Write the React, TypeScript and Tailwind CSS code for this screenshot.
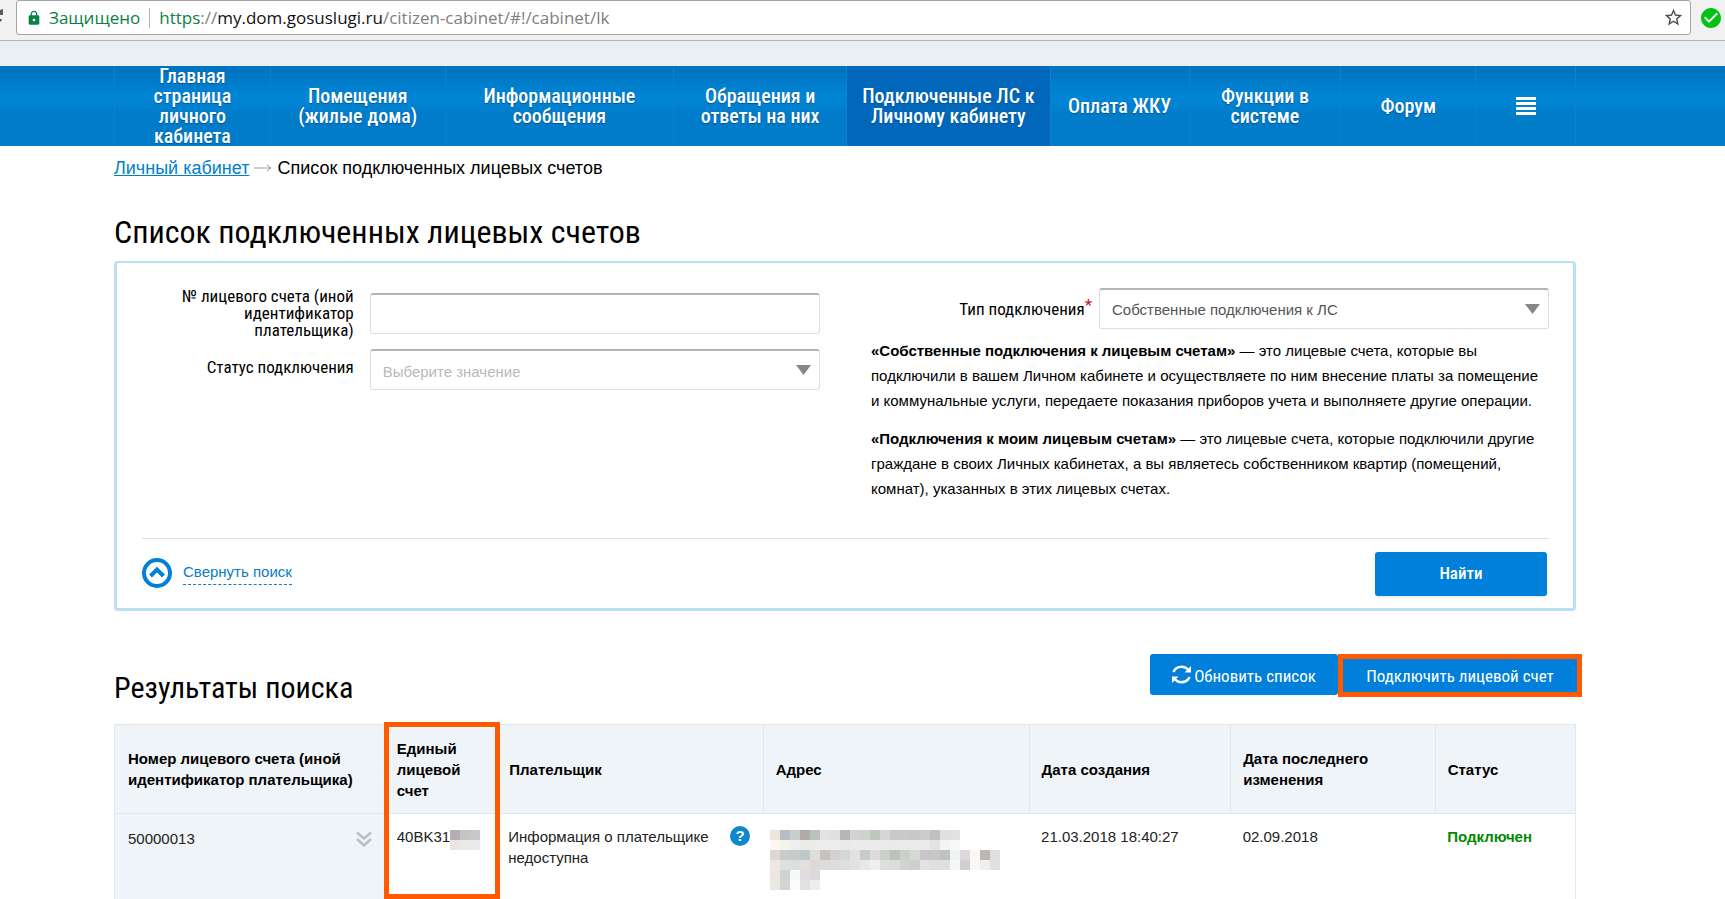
import { useState } from "react";
import { MdCheckCircle, MdLock, MdStarBorder } from "react-icons/md";


/////////////////////////////// DATA ///////////////////////////////

const NAV_ITEMS = [
  { label: "Главная страница личного кабинета", pad: "px-8" },
  { label: "Помещения (жилые дома)", pad: "px-6" },
  { label: "Информационные сообщения", pad: "px-8" },
  { label: "Обращения и ответы на них", pad: "px-5" },
  { label: "Подключенные ЛС к Личному кабинету", pad: "px-3" },
  { label: "Оплата ЖКУ", pad: "px-2" },
  { label: "Функции в системе", pad: "px-7" },
  { label: "Форум", pad: "px-4" },
];

const ACTIVE_ITEM = 4;

// hidden parts of the table, 10px per cell
const ADDRESS_MOSAIC = [
  ["#ece6dd", "#b6bec4", "#c9cfca", "#b1aaa8", "#bbc1bc", "#e2e2e2", "#e0e0e0", "#b3b8b5", "#d2d4d2", "#cfd2cf", "#bcc8bc", "#d5d7d5", "#c9cac8", "#c9cbc9", "#c8c8c8", "#cccccc", "#bfc1bf", "#e0e0e0", "#e2e1e2"],
  ["#fbf7f2", "#f4f4ef", "#eeeeee", "#ebebeb", "#ebedeb", "#ededed", "#ededed", "#e9ebe9", "#ececec", "#ebebeb", "#ececec", "#ebebeb", "#e9ebe9", "#ebebeb", "#ebebeb", "#ebebeb", "#e3e3e3", "#f1f5f3", "#f8f8f8"],
  ["#dfd7d5", "#c9cbc9", "#c8cac9", "#bec8ca", "#dedede", "#c8c1c0", "#d4cfd0", "#d3d8da", "#e2e2e2", "#c6cdc9", "#dcdcdc", "#ccd0cd", "#bfc1bc", "#cdcfcd", "#d3d9d5", "#cac4c9", "#c5c9c6", "#bfc3be", "#edf5f3", "#dcd9dc", "#fbf8f4", "#bcb9b5", "#dde0df"],
  ["#ece8e4", "#dde0dd", "#dcdedd", "#e0e0e0", "#dfd9d6", "#dcdcdc", "#dddddd", "#dedede", "#e2e2e2", "#e8e8e8", "#f0efee", "#dedede", "#dcdcdc", "#d0d4d0", "#cdcfcc", "#e5e0e5", "#dfdfdf", "#dfdfdf", "#f3f9f7", "#d1cdd0", "#f9f8f5", "#efeeed", "#dde2e0"],
  ["#ece6e0", "#cfd3cf", "#f8faf8", "#e0dcdf", "#dadbdc"],
  ["#ece7e2", "#d2d6d3", "#fafcfb", "#e4dfe1", "#eceeee"],
];

const ACCOUNT_MOSAIC = [
  ["#b5adb3", "#c3c6c2", "#c7c7cb"],
  ["#ebe5e0", "#e9e9e7", "#eae9ec"],
];


/////////////////////////////// PARTS ///////////////////////////////

function Mosaic ({ cells, label }: { cells: string[][]; label: string }) {
  const cols = Math.max(...cells.map(row => row.length));

  return (
    <svg
      role="img"
      aria-label={label}
      width={cols * 10}
      height={cells.length * 10}
      shapeRendering="crispEdges"
    >
      {cells.map((row, y) =>
        row.map((fill, x) => (
          <rect key={`${x}-${y}`} x={x * 10} y={y * 10} width="10" height="10" fill={fill}/>
        ))
      )}
    </svg>
  );
}

function RefreshIcon () {
  return (
    <svg viewBox="0 0 19 19" className="size-[19px]" fill="none" stroke="currentColor" strokeWidth="2.5" aria-hidden="true">
      <path d="M1.500 7C3 3 7 1.800 10 1.800c3 0 4.500 1 6.500 3"/>
      <path d="M17.500 12C16 16 12 17.200 9 17.200c-3 0-4.500-1-6.500-3"/>
      <path d="M19 1v6.500h-6.500zM0 18V11.500h6.500z" fill="currentColor" stroke="none"/>
    </svg>
  );
}

function SelectBox ({ id, options, muted }: { id: string; options: string[]; muted?: boolean }) {
  return (
    <div className="relative">
      <select
        id={id}
        className={`block w-full h-[41px] px-3 appearance-none rounded-[3px] border border-[#dedede] border-t-2 border-t-[#b5b5b5] bg-white text-[15px] ${muted ? "pt-1 text-[#b9b9b9]" : "text-[#555555]"}`}
      >
        {options.map(option => <option key={option}>{option}</option>)}
      </select>
      <svg
        viewBox="0 0 15 10"
        className="absolute right-[9px] top-4 w-[15px] h-[10px] pointer-events-none"
        aria-hidden="true"
      >
        <path d="M0 0h15L7.500 10z" fill="#878787"/>
      </svg>
    </div>
  );
}


/////////////////////////////// BROWSER BAR ///////////////////////////////

function AddressBar () {
  return (
    <div className="flex items-start h-[41px] bg-[#f1f1f1] border-b border-[#b0b3b6] font-['Open_Sans','Noto_Sans',sans-serif]">

      {/* edge of the reload button */}
      <svg viewBox="0 0 16 16" className="w-4 h-4 mt-[9px] text-[#5a5a5a]" aria-hidden="true">
        <path d="M0 1l3-1v6H0zM0 10h2q0 2-2 3z" fill="currentColor"/>
      </svg>

      <div className="flex flex-1 items-center h-[35px] pl-[9px] pr-[6px] bg-white border border-[#a5a5a5] rounded-[3px] text-[17px]">
        <MdLock className="size-4 text-[#0b8043]"/>
        <span className="ml-[7px] text-[#0b8043]">Защищено</span>
        <span className="mx-[9px] w-px h-5 bg-[#b4b4b4]"/>
        <p className="flex-1 text-[#808080]">
          <span className="text-[#0b8043]">https</span>://<span className="text-[#111111]">my.dom.gosuslugi.ru</span>/citizen-cabinet/#!/cabinet/lk
        </p>
        <button type="button" aria-label="Добавить в закладки">
          <MdStarBorder className="size-[21px] text-[#4d4d4d]"/>
        </button>
      </div>

      <MdCheckCircle className="size-6 mt-[6px] ml-2 mr-[2px] text-[#00c314]"/>
    </div>
  );
}


/////////////////////////////// NAVIGATION ///////////////////////////////

function NavBar () {
  return (
    <nav className="h-20 pl-[114px] pr-[149px] bg-linear-to-b from-[#0071bd] via-[#0086d6] via-40% to-[#007cc9] to-60%">
      <ul className="grid grid-cols-[156fr_175fr_229fr_173fr_204fr_139fr_152fr_135fr_99fr] h-full border-x border-[#0f80cb]">
        {NAV_ITEMS.map((item, i) => (
          <li key={item.label} className={`border-r border-[#0f80cb] ${i === ACTIVE_ITEM ? "bg-[#0067ba]" : ""}`}>
            <a
              href="#"
              className={`flex h-full items-center justify-center text-center text-white text-[20px] leading-5 font-medium [text-shadow:0_1px_1px_#00559a] font-['Roboto_Condensed','Liberation_Sans_Narrow',Roboto,sans-serif] ${item.pad}`}
            >
              {item.label}
            </a>
          </li>
        ))}
        <li>
          <button type="button" aria-label="Все разделы" className="flex w-full h-full items-center justify-center">
            <svg viewBox="0 0 20 18" className="w-5 h-[18px]" aria-hidden="true">
              <path d="M0 0h20v3H0zM0 5h20v3H0zM0 10h20v3H0zM0 15h20v3H0z" fill="#ffffff"/>
            </svg>
          </button>
        </li>
      </ul>
    </nav>
  );
}


/////////////////////////////// SEARCH PANEL ///////////////////////////////

function SearchPanel () {
  const [account, setAccount] = useState("");

  return (
    <form
      className="h-[350px] pl-[25px] pr-6 border-[3px] border-t-2 border-[#b9dff2] rounded-[4px]"
      onSubmit={e => e.preventDefault()}
    >
      <div className="flex h-[276px] border-b border-[#dcdfe2]">

        {/* LEFT HAND SIDE */}
        <div className="w-[678px] shrink-0 pt-[25px]">
          <div className="flex h-[51px] items-center">
            <label htmlFor="account" className="w-[212px] pl-7 text-right text-[17px] leading-[17px] font-['Roboto_Condensed','Liberation_Sans_Narrow',Roboto,sans-serif]">
              № лицевого счета (иной идентификатор плательщика)
            </label>
            <input
              id="account"
              type="text"
              value={account}
              onChange={e => setAccount(e.target.value)}
              className="w-[451px] h-[41px] ml-4 px-3 text-[15px] rounded-[3px] border border-[#dedede] border-t-2 border-t-[#b5b5b5]"
            />
          </div>
          <div className="flex mt-[10px] items-center">
            <label htmlFor="status" className="w-[212px] pb-1 text-right text-[17px] leading-[17px] font-['Roboto_Condensed','Liberation_Sans_Narrow',Roboto,sans-serif]">
              Статус подключения
            </label>
            <div className="w-[451px] ml-4">
              <SelectBox id="status" options={["Выберите значение"]} muted/>
            </div>
          </div>
        </div>

        {/* RIGHT HAND SIDE */}
        <div className="flex-1 ml-[51px] pt-[25px] text-[15px] leading-[25px]">
          <div className="flex items-center justify-end">
            <label htmlFor="type" className="flex mr-[7px] text-[17px] leading-5 font-['Roboto_Condensed','Liberation_Sans_Narrow',Roboto,sans-serif]">
              Тип подключения
              <span className="-mt-1 text-[#c5161d]">*</span>
            </label>
            <div className="w-[450px]">
              <SelectBox id="type" options={["Собственные подключения к ЛС"]}/>
            </div>
          </div>
          <p className="mt-[9px]">
            <b>«Собственные подключения к лицевым счетам»</b> — это лицевые счета, которые вы подключили в вашем Личном кабинете и осуществляете по ним внесение платы за помещение и коммунальные услуги, передаете показания приборов учета и выполняете другие операции.
          </p>
          <p className="mt-[13px]">
            <b>«Подключения к моим лицевым счетам»</b> — это лицевые счета, которые подключили другие граждане в своих Личных кабинетах, а вы являетесь собственником квартир (помещений, комнат), указанных в этих лицевых счетах.
          </p>
        </div>
      </div>

      {/* Bottom row */}
      <div className="flex items-center justify-between pt-[13px]">
        <button type="button" className="flex items-start pb-0.5 text-[15px] text-[#0b7cc1]">
          <svg viewBox="0 0 30 30" className="size-[30px] mr-[11px]" fill="none" stroke="#0080d7" aria-hidden="true">
            <circle cx="15" cy="15" r="13" strokeWidth="4"/>
            <path d="M8.500 18L15 11.500l6.500 6.500" strokeWidth="4"/>
          </svg>
          <span className="mt-0.5 leading-6 border-b border-dashed border-[#0b7cc1]">Свернуть поиск</span>
        </button>
        <button
          type="submit"
          className="w-[172px] h-11 mr-0.5 rounded-[3px] bg-[#007fdb] shadow-sm text-[17px] font-medium text-white font-['Roboto_Condensed','Liberation_Sans_Narrow',Roboto,sans-serif]"
        >
          Найти
        </button>
      </div>
    </form>
  );
}


/////////////////////////////// RESULTS ///////////////////////////////

function ResultsTable () {
  return (
    <table className="w-full table-fixed border-collapse text-[15px] leading-[21px] text-left">
      <colgroup>
        <col className="w-[18.5%]"/>
        <col className="w-[7.7%]"/>
        <col className="w-[18.2%]"/>
        <col className="w-[18.2%]"/>
        <col className="w-[13.8%]"/>
        <col className="w-[14%]"/>
        <col/>
      </colgroup>
      <thead className="bg-[#eff4f8]">
        <tr className="h-[89px] border border-[#dfe7ed]">
          <th className="px-[13px]">Номер лицевого счета (иной идентификатор плательщика)</th>
          <th className="relative px-3">
            Единый лицевой счет
            {/* highlight frame over the column */}
            <span className="absolute -top-[3px] -left-px -right-[3px] h-[177px] border-5 border-[#ff5a00] pointer-events-none"/>
          </th>
          <th className="px-3">Плательщик</th>
          <th className="px-3 border-l border-[#dfe7ed]">Адрес</th>
          <th className="px-3 border-l border-[#dfe7ed]">Дата создания</th>
          <th className="px-3 border-l border-[#dfe7ed]">Дата последнего изменения</th>
          <th className="px-3 border-l border-[#dfe7ed]">Статус</th>
        </tr>
      </thead>
      <tbody>
        <tr className="h-[85px] border-x border-[#dfe7ed] align-top text-[#222222]">
          <td className="px-[13px] pt-[14px] bg-[#eff4f8]">
            <div className="flex items-center justify-between">
              50000013
              <button type="button" aria-label="Подробнее">
                <svg viewBox="0 0 16 16" className="size-4" fill="none" stroke="#bcbfc2" strokeWidth="2.5" aria-hidden="true">
                  <path d="M1 1.500l7 6 7-6M1 8l7 6.500L15 8"/>
                </svg>
              </button>
            </div>
          </td>
          <td className="pl-3 pt-3">
            <div className="flex">
              40BK31
              <span className="pt-1">
                <Mosaic cells={ACCOUNT_MOSAIC} label="Номер скрыт"/>
              </span>
            </div>
          </td>
          <td className="pl-[11px] pr-[13px] pt-3">
            <div className="flex items-start justify-between">
              <span className="w-[210px]">Информация о плательщике недоступна</span>
              <button type="button" aria-label="Справка" className="size-5 rounded-full bg-[#0d87cf] text-center text-[15px] leading-5 font-bold text-white">?</button>
            </div>
          </td>
          <td className="pl-[7px] pt-4"><Mosaic cells={ADDRESS_MOSAIC} label="Адрес скрыт"/></td>
          <td className="px-3 pt-3">21.03.2018 18:40:27</td>
          <td className="px-3 pt-3">02.09.2018</td>
          <td className="px-3 pt-3 font-bold text-[#008a00]">Подключен</td>
        </tr>
      </tbody>
    </table>
  );
}


/////////////////////////////// PAGE ///////////////////////////////

export default function App () {
  return (
    <div className="bg-white text-black font-['Liberation_Sans',Arial,sans-serif]">
      <AddressBar/>
      <div className="h-[25px] bg-[#e8f0f4]"/>
      <NavBar/>

      <main className="pl-[114px] pr-[149px]">

        {/* Breadcrumbs */}
        <div className="flex items-center pt-[10px] text-[18px] leading-6">
          <a href="#" className="text-[#0080cc] underline">Личный кабинет</a>
          <svg viewBox="0 0 18 8" className="w-[18px] h-2 mx-[5px]" fill="none" stroke="#9a9a9a" aria-hidden="true">
            <path d="M0 4h17M13 1l4 3-4 3"/>
          </svg>
          <span>Список подключенных лицевых счетов</span>
        </div>

        <h1 className="mt-[33px] mb-[10px] text-[32px] leading-[38px] font-['Roboto_Condensed','Liberation_Sans_Narrow',Roboto,sans-serif]">
          Список подключенных лицевых счетов
        </h1>

        <SearchPanel/>

        {/* Results heading and actions */}
        <div className="flex items-start justify-between mt-[43px] mb-4">
          <h2 className="mt-[14px] text-[30px] leading-10 font-['Roboto_Condensed','Liberation_Sans_Narrow',Roboto,sans-serif]">
            Результаты поиска
          </h2>
          <div className="flex items-start -mr-[6px] text-[17px] text-white font-['Roboto_Condensed','Liberation_Sans_Narrow',Roboto,sans-serif]">
            <button type="button" className="flex items-center justify-center gap-[3px] w-[188px] h-[41px] rounded-[3px] bg-[#007fdb]">
              <RefreshIcon/>
              <span className="pt-1">Обновить список</span>
            </button>
            <button type="button" className="w-[244px] h-[43px] pt-0.5 border-5 border-[#ff5a00] bg-[#007fdb]">
              Подключить лицевой счет
            </button>
          </div>
        </div>

        <ResultsTable/>
      </main>
    </div>
  );
}
